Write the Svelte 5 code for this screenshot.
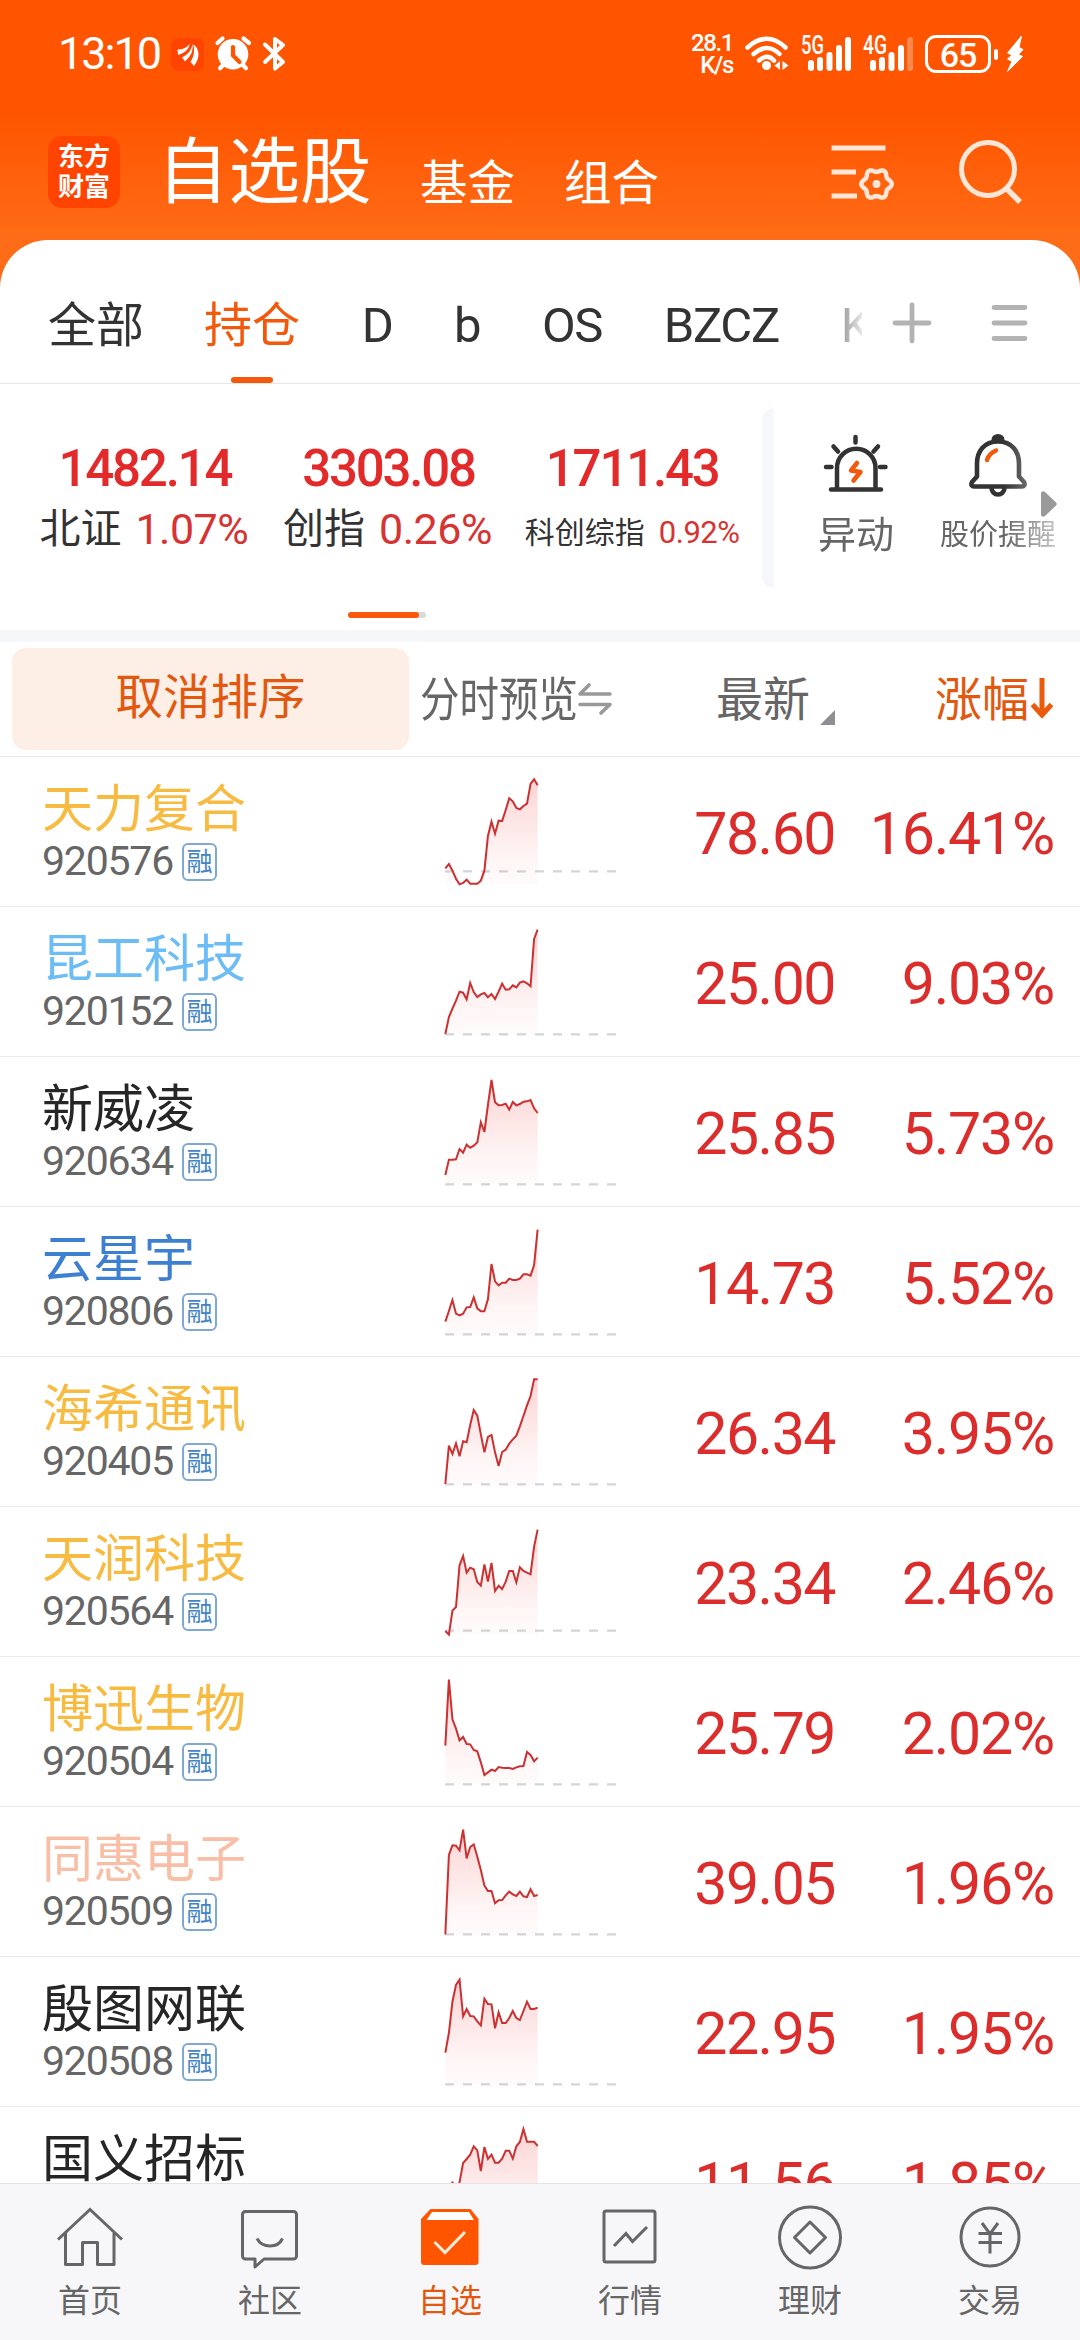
<script>
  // 自选股 - 持仓列表

  const tabs = ["全部", "持仓", "D", "b", "OS", "BZCZ", "K"];
  let tabActivo = "持仓";

  const indices = [
    { nombre: "北证", valor: "1482.14", cambio: "1.07%" },
    { nombre: "创指", valor: "3303.08", cambio: "0.26%" },
    { nombre: "科创综指", valor: "1711.43", cambio: "0.92%", small: true }
  ];

  // base = línea de cierre anterior, puntos = precio por intervalo
  const stocks = [
    { nombre: "天力复合", codigo: "920576", color: "gold", precio: "78.60", cambio: "16.41%", base: 349,
      puntos: [340,327,347,371,388,384,374,386,386,386,377,347,243,200,236,197,198,165,130,139,159,163,153,146,87,73,91] },
    { nombre: "昆工科技", codigo: "920152", color: "sky", precio: "25.00", cambio: "9.03%", base: 388,
      puntos: [387,336,311,287,260,263,283,234,261,276,268,264,277,267,282,260,236,254,253,241,247,233,229,235,244,102,74] },
    { nombre: "新威凌", codigo: "920634", color: "dark", precio: "25.85", cambio: "5.73%", base: 388,
      puntos: [360,314,314,313,282,293,269,278,272,262,202,231,150,75,142,151,150,146,164,141,151,147,140,139,135,160,174] },
    { nombre: "云星宇", codigo: "920806", color: "blue", precio: "14.73", cambio: "5.52%", base: 388,
      puntos: [350,318,285,326,331,326,307,306,277,310,319,319,283,177,229,241,233,233,221,225,225,221,208,208,212,180,74] },
    { nombre: "海希通讯", codigo: "920405", color: "gold", precio: "26.34", cambio: "3.95%", base: 388,
      puntos: [387,272,297,265,304,259,262,210,165,182,238,292,246,240,292,333,291,284,266,253,242,214,183,151,123,73,73] },
    { nombre: "天润科技", codigo: "920564", color: "gold", precio: "23.34", cambio: "2.46%", base: 377,
      puntos: [378,389,317,306,181,153,203,188,193,231,242,178,230,174,258,242,252,230,198,198,232,187,198,203,208,125,74] },
    { nombre: "博迅生物", codigo: "920504", color: "gold", precio: "25.79", cambio: "2.02%", base: 388,
      puntos: [272,74,193,221,256,246,267,268,285,289,322,360,352,344,348,336,338,339,339,342,337,334,333,291,300,319,308] },
    { nombre: "同惠电子", codigo: "920509", color: "pink", precio: "39.05", cambio: "1.96%", base: 388,
      puntos: [388,150,121,122,136,74,160,126,118,155,195,242,258,258,295,286,285,271,260,268,273,260,274,276,253,273,270] },
    { nombre: "殷图网联", codigo: "920508", color: "dark", precio: "22.95", cambio: "1.95%", base: 388,
      puntos: [293,234,140,90,74,184,162,183,184,199,211,131,147,148,220,172,204,204,189,168,189,195,168,140,162,162,158] },
    { nombre: "国义招标", codigo: "920505", color: "dark", precio: "11.56", cambio: "1.85%", base: 388,
      puntos: [388,300,230,280,232,174,162,149,124,136,198,126,162,149,173,173,161,137,137,161,124,111,72,110,110,110,123] }
  ];

  const menu = ["首页", "社区", "自选", "行情", "理财", "交易"];

  function linea(puntos) {
    return puntos.map((y, i) => `${(76 + i * 10.65).toFixed(1)},${y}`).join(" ");
  }

  // contorno ondulado del engranaje
  const engranaje = Array.from({ length: 72 }, (_, i) => {
    const a = (i * Math.PI) / 36;
    const r = 13.6 + 1.6 * Math.cos(6 * a);
    return `${(45.5 + r * Math.cos(a)).toFixed(2)},${(40 + r * Math.sin(a)).toFixed(2)}`;
  }).join(" ");
</script>

<main class="app">
  <div class="status">
    <span class="time">13:10</span>
    <svg class="st-app" width="33" height="33" viewBox="0 0 33 33">
      <rect width="33" height="33" rx="7" fill="#ff4400" />
      <path d="M6.500 11.500q8.500 0 12.500-6q-2 9-12 11.500zM11 19.500q9.500-5 10.500-13.500q2 9-7.500 17.500zM19.500 24q5-8 3-17.500q5 4 5 9.500q0 6-4.500 12z" fill="#fff" />
    </svg>
    <svg class="st-alarm" width="40" height="40" viewBox="0 0 40 40" fill="none" stroke="#fff" stroke-linecap="round">
      <circle cx="20" cy="20.3" r="15.3" fill="#fff" stroke="none" />
      <path d="M4.500 9l5-4.500M30.500 4.500l5.500 4.500M10 31l-3 3.200M30 31l3 3.200" stroke-width="4.200" />
      <path d="M20 13v8.500l6.500 6.500" stroke="#ff5500" stroke-width="4.200" />
    </svg>
    <svg class="st-bt" width="26" height="40" viewBox="0 0 26 40" fill="none" stroke="#fff" stroke-width="4" stroke-linecap="round" stroke-linejoin="round">
      <path d="M4 10.500L22 28l-8 6.500V5l8 6L4 28" />
    </svg>

    <div class="speed"><span>28.1</span><span>K/s</span></div>
    <svg class="st-wifi" width="46" height="38" viewBox="0 0 46 38" fill="none" stroke="#fff" stroke-width="4.500" stroke-linecap="round">
      <path d="M3.500 12.500Q23-5 41.500 12.500M9.500 19Q23 7 35.500 19M15 25.500Q23 18 30 25.500" />
      <circle cx="22.500" cy="30.500" r="4.500" fill="#fff" stroke="none" />
      <path d="M36 26v9l-5.500-4.500zM38.500 26v9l6-4.500z" fill="#fff" stroke="none" />
    </svg>
    <svg class="st-sig" width="54" height="38" viewBox="0 0 54 38" fill="#fff">
      <text x="0" y="18.500" class="net" textLength="23" lengthAdjust="spacingAndGlyphs">5G</text>
      <rect x="7" y="25" width="6" height="11" rx="3" />
      <rect x="16" y="22" width="6" height="14" rx="3" />
      <rect x="25.500" y="17" width="6" height="19" rx="3" />
      <rect x="35" y="10" width="6" height="26" rx="3" />
      <rect x="44" y="2" width="6" height="34" rx="3" />
    </svg>
    <svg class="st-sig second" width="54" height="38" viewBox="0 0 54 38" fill="#fff">
      <text x="0" y="18.500" class="net" textLength="24" lengthAdjust="spacingAndGlyphs">4G</text>
      <rect x="7" y="25" width="6" height="11" rx="3" />
      <rect x="16" y="22" width="6" height="14" rx="3" />
      <rect x="25.500" y="17" width="6" height="19" rx="3" />
      <rect x="35" y="10" width="6" height="26" rx="3" />
      <rect x="44" y="2" width="6" height="34" rx="3" opacity="0.3" />
    </svg>
    <div class="battery">65</div>
    <i class="nub"></i>
    <svg class="st-bolt" width="18" height="38" viewBox="0 0 18 38" fill="#fff">
      <path d="M15.500 1L1.500 18l4.500 2L1.500 24l4.500 2.500L1.500 36.500 16.500 21.500l-4-2 4.500-5-4-2z" stroke="#fff" stroke-linejoin="round" />
    </svg>
  </div>

  <header class="header">
    <div class="logo"><span>东方</span><span>财富</span></div>
    <h1 class="title">自选股</h1>
    <span class="sub">基金</span>
    <span class="sub">组合</span>
    <svg class="ic-list" width="64" height="62" viewBox="0 0 64 62" fill="none" stroke="#ffe6d6" stroke-width="5">
      <path d="M0.500 4h54M0.500 28h24.500M0.500 52h25.500" />
      <polygon points={engranaje} stroke-width="4.500" stroke-linejoin="round" />
      <circle cx="45.500" cy="40" r="4" fill="#ffe6d6" stroke="none" />
    </svg>
    <svg class="ic-search" width="66" height="66" viewBox="0 0 66 66" fill="none" stroke="#ffe6d6" stroke-width="5">
      <circle cx="31" cy="31" r="26.500" />
      <path d="M49.500 50.500L63 64" stroke-width="5.500" />
    </svg>
  </header>

  <section class="sheet">
    <nav class="tabs">
      <div class="tab-list">
        {#each tabs as tab, i}
          <button class="tab" class:latin={i > 1} class:active={tab === tabActivo} on:click={() => (tabActivo = tab)}>{tab}</button>
        {/each}
      </div>
      <svg class="ic-plus" width="40" height="42" viewBox="0 0 40 42" stroke="#b3b3b3" stroke-width="4.800" stroke-linecap="round">
        <path d="M3 21h34M20 3v36" />
      </svg>
      <svg class="ic-menu" width="38" height="40" viewBox="0 0 38 40" stroke="#b3b3b3" stroke-width="4.800" stroke-linecap="round">
        <path d="M4 4.500h31M4 20h31M4 35.500h31" />
      </svg>
    </nav>

    <div class="market">
      <div class="indices">
        {#each indices as ind}
          <div class="indice">
            <strong>{ind.valor}</strong>
            <p class:small={ind.small}><span>{ind.nombre}</span><em>{ind.cambio}</em></p>
          </div>
        {/each}
      </div>
      <div class="divider"></div>
      <div class="tools">
        <div class="tool">
          <svg width="66" height="64" viewBox="0 0 66 64" fill="none" stroke="#333" stroke-width="4.500" stroke-linecap="round">
            <path d="M14 54V34a19 19 0 0 1 38.500 0V54" />
            <path d="M8 55.500h50" />
            <path d="M32.500 3v5.500M10.500 12.500l4.500 5M55 12.500l-4.500 5M3 33h5.500M57 33h5.500" />
            <path d="M34 29l-6 7.500 9.500 1.500-7 8.500" stroke="#f2590d" stroke-width="4.500" stroke-linejoin="round" />
          </svg>
          <span>异动</span>
        </div>
        <div class="tool small">
          <svg width="66" height="64" viewBox="0 0 66 64" fill="none" stroke="#333" stroke-width="4.600" stroke-linecap="round" stroke-linejoin="round">
            <path d="M27.500 5.500a5.500 4.500 0 0 1 11 0z" fill="#333" stroke-width="2" />
            <path d="M33 7.500c-14 0-21 10-21 22v13l-5 5.500c-1.500 3 0 4.500 2 4.500h48c2 0 3.500-1.500 2-4.500l-5-5.500V29.500c0-12-7-22-21-22z" />
            <path d="M26.500 54a6.500 6.500 0 0 0 13 0" />
            <path d="M22 26q2-6.500 9-9.500" stroke="#f2590d" stroke-width="4.500" />
          </svg>
          <span>股价提醒</span>
        </div>
      </div>
      <svg class="more" width="16" height="26" viewBox="0 0 16 26" fill="#999">
        <path d="M0 3q0-4 4-2l11 10.500q1.500 1.500 0 3L4 25q-4 2-4-2z" />
      </svg>
      <div class="pager"><i></i></div>
    </div>

    <div class="band"></div>

    <div class="thead">
      <button class="cancel">取消排序</button>
      <div class="th preview">
        <span>分时预览</span>
        <svg width="34" height="32" viewBox="0 0 34 32" fill="none" stroke="#999" stroke-width="3.600" stroke-linecap="round" stroke-linejoin="round">
          <path d="M32 11H2l9-9M2 21.500h30l-9 8.500" />
        </svg>
      </div>
      <div class="th latest">最新<i></i></div>
      <div class="th change">
        涨幅
        <svg width="24" height="42" viewBox="0 0 24 42" fill="none" stroke="#ec5a0c" stroke-width="5">
          <path d="M12 0v36M2.500 26.500L12 37l9.500-10.500" />
        </svg>
      </div>
    </div>

    {#each stocks as stock}
      <article class="row">
        <div class="info">
          <h2 class={stock.color}>{stock.nombre}</h2>
          <p><span>{stock.codigo}</span><b>融</b></p>
        </div>
        <svg class="spark" width="220" height="149" viewBox="0 6 660 447" fill="none">
          <defs>
            <linearGradient id={"g" + stock.codigo} gradientUnits="userSpaceOnUse" x1="0" y1="74" x2="0" y2="388">
              <stop offset="0" stop-color="#f43c3c" stop-opacity="0.22" />
              <stop offset="0.75" stop-color="#f43c3c" stop-opacity="0.05" />
              <stop offset="1" stop-color="#f43c3c" stop-opacity="0.02" />
            </linearGradient>
          </defs>
          <path d={`M75 ${stock.base}H588`} stroke="#d3d5da" stroke-width="7" stroke-dasharray="27 27" />
          <polygon points={`76,388 ${linea(stock.puntos)} 353,388`} fill={`url(#g${stock.codigo})`} />
          <polyline points={linea(stock.puntos)} stroke="#cc3030" stroke-width="6" />
        </svg>
        <span class="price">{stock.precio}</span>
        <span class="pct">{stock.cambio}</span>
      </article>
    {/each}
  </section>

  <footer class="bottom">
    {#each menu as item, i}
      <div class="item" class:on={i === 2}>
        <svg width="72" height="72" viewBox="0 0 72 72" fill="none" stroke="#666" stroke-width="3">
          {#if i === 0}
            <path d="M4 37.500L36 7.500l32 30" />
            <path d="M11.500 31v31.500h17V40.500h15v22h16.500V31" stroke-linejoin="round" />
          {:else if i === 1}
            <path d="M11.500 9.500h48a3 3 0 0 1 3 3v41.500a3 3 0 0 1-3 3H30l-9 8v-8h-9.500a3 3 0 0 1-3-3V12.500a3 3 0 0 1 3-3z" stroke-linejoin="round" />
            <path d="M23 36.500q4 7.500 13 7.500t12.500-7.500" />
          {:else if i === 2}
            <path d="M16.500 7h40l8 10v43a3 3 0 0 1-3 3H10a3 3 0 0 1-3-3V17z" fill="#ff5500" stroke="none" />
            <path d="M18 10h37l5 8H12.500z" fill="#fff" stroke="none" />
            <path d="M20.500 40L31 50.500 51 30" stroke="#ffeadb" />
          {:else if i === 3}
            <rect x="10" y="9" width="51" height="51" rx="2" />
            <path d="M20 44l12-12.500 6.500 8L53 25" />
          {:else if i === 4}
            <circle cx="36" cy="35.500" r="30.500" />
            <path d="M36 20l15.500 15.500L36 51 20.500 35.500z" stroke-linejoin="round" />
          {:else}
            <circle cx="36" cy="35" r="29" />
            <path d="M28 21l8 11 8-11M36 32v19.500M24.500 31.500h23.500M24.500 40.500h23.500" />
          {/if}
        </svg>
        <span>{item}</span>
      </div>
    {/each}
  </footer>
</main>

<style>
  :global(body) {
    margin: 0;
    background: #fff;
  }

  .app {
    width: 1080px;
    height: 2340px;
    overflow: hidden;
    display: flex;
    flex-direction: column;
    font-family: Roboto, "Noto Sans CJK SC", sans-serif;
    background: linear-gradient(#ff5500 0, #ff5500 115px, #ff6c17 240px);
    color: #333;
  }

  svg {
    display: block;
    flex: none;
    overflow: visible;
  }

  button {
    border: none;
    background: none;
    padding: 0;
    font: inherit;
    color: inherit;
  }

  .status {
    height: 108px;
    flex: none;
    display: flex;
    align-items: center;
    box-sizing: border-box;
    padding-left: 58px;
    color: #fff;
  }

  .time {
    width: 113px;
    font-size: 45px;
    line-height: 54px;
    letter-spacing: -2px;
  }

  .st-alarm {
    margin-left: 9px;
  }

  .st-bt {
    margin-left: 8px;
  }

  .speed {
    width: 44px;
    margin-left: 402px;
    display: flex;
    flex-direction: column;
    align-items: flex-end;
    font-size: 24px;
    font-weight: 500;
    line-height: 22px;
    letter-spacing: -1.4px;
  }

  .st-wifi {
    margin-left: 11px;
  }

  .st-sig {
    margin-left: 11px;
  }

  .st-sig.second {
    margin-left: 8px;
  }

  .net {
    font-size: 25px;
    font-weight: 500;
  }

  .battery {
    width: 66px;
    height: 38px;
    box-sizing: border-box;
    border: 3px solid #fff;
    border-radius: 11px;
    margin-left: 8px;
    font-size: 34px;
    font-weight: 500;
    line-height: 34px;
    text-align: center;
    letter-spacing: -1px;
  }

  .nub {
    width: 4px;
    height: 11px;
    border-radius: 2px;
    background: #fff;
    margin-left: 3px;
  }

  .st-bolt {
    margin-left: 8px;
  }

  .header {
    height: 132px;
    flex: none;
    display: flex;
    align-items: flex-start;
    box-sizing: border-box;
    padding: 28px 0 0 48px;
    color: #fff;
  }

  .logo {
    width: 72px;
    height: 72px;
    border-radius: 14px;
    background: #ff4400;
    display: flex;
    flex-direction: column;
    align-items: center;
    justify-content: center;
    font-size: 26px;
    font-weight: 700;
    line-height: 30px;
  }

  .title {
    margin: 0 0 0 37px;
    width: 212px;
    font-size: 71.500px;
    line-height: 74px;
    font-weight: 400;
    white-space: nowrap;
  }

  .sub {
    margin-left: 51px;
    width: 94px;
    font-size: 47.500px;
    line-height: 48px;
    padding-top: 24px;
    white-space: nowrap;
  }

  .sub + .sub {
    margin-left: 50px;
  }

  .ic-list {
    margin: 8px 0 0 173px;
  }

  .ic-search {
    margin: 2px 0 0 62px;
  }

  .sheet {
    flex: 1;
    min-height: 0;
    overflow: hidden;
    background: #fff;
    border-radius: 48px 48px 0 0;
  }

  .tabs {
    height: 143px;
    border-bottom: 1px solid #e6e6e6;
    display: flex;
    align-items: center;
  }

  .tab-list {
    width: 814px;
    height: 143px;
    padding-left: 48px;
    display: flex;
    gap: 60px;
    overflow: hidden;
    flex: none;
    -webkit-mask-image: linear-gradient(90deg, #000 815px, transparent 868px);
    mask-image: linear-gradient(90deg, #000 815px, transparent 868px);
  }

  .tab {
    flex: none;
    display: flex;
    flex-direction: column;
    align-items: center;
    font-size: 48px;
    line-height: 102px;
    padding-top: 35px;
  }

  .tab.latin {
    margin-left: 1.600px;
    font-size: 49px;
    letter-spacing: -1.300px;
  }

  .tab.active {
    color: #f2590d;
  }

  .tab.active::after {
    content: "";
    width: 42px;
    height: 6px;
    border-radius: 3px;
    background: #f2590d;
  }

  .ic-plus {
    margin-left: 30px;
    margin-top: 22px;
  }

  .ic-menu {
    margin-left: 58px;
    margin-top: 22px;
  }

  .market {
    height: 246px;
    position: relative;
    display: flex;
    align-items: flex-start;
  }

  .indices {
    width: 731px;
    padding: 54px 0 0 23px;
    display: grid;
    grid-template-columns: repeat(3, 1fr);
  }

  .indice {
    display: flex;
    flex-direction: column;
    align-items: center;
    white-space: nowrap;
  }

  .indice strong {
    font-size: 51px;
    font-weight: 500;
    line-height: 62px;
    letter-spacing: -2.200px;
    color: #e22a2a;
  }

  .indice p {
    margin: 0 2px 0 0;
    height: 58px;
    line-height: 58px;
    display: flex;
    gap: 14px;
    font-size: 41px;
  }

  .indice em {
    font-style: normal;
    color: #d63333;
    font-size: 43px;
    letter-spacing: -0.5px;
  }

  .indice p.small {
    margin-right: 0;
    font-size: 30px;
    line-height: 66px;
  }

  .indice p.small em {
    font-size: 31px;
  }

  .divider {
    width: 12px;
    height: 180px;
    margin: 24px 0 0 8px;
    border-radius: 12px 0 0 12px;
    background: #f6f7fb;
  }

  .tools {
    width: 284px;
    height: 190px;
    display: flex;
    overflow: hidden;
    -webkit-mask-image: linear-gradient(90deg, #000 230px, rgba(0, 0, 0, 0.35) 284px);
    mask-image: linear-gradient(90deg, #000 230px, rgba(0, 0, 0, 0.35) 284px);
  }

  .tool {
    width: 76px;
    margin-left: 44px;
    padding-top: 50px;
    display: flex;
    flex-direction: column;
    align-items: center;
    color: #666;
    font-size: 38px;
    line-height: 74px;
    white-space: nowrap;
    flex: none;
  }

  .tool.small {
    width: 116px;
    margin-left: 46px;
    font-size: 29px;
  }

  .more {
    position: absolute;
    left: 1041px;
    top: 107px;
  }

  .pager {
    position: absolute;
    left: 348px;
    top: 228px;
    width: 78px;
    height: 6px;
    border-radius: 3px;
    background: #d9d9d9;
  }

  .pager i {
    display: block;
    width: 71px;
    height: 6px;
    border-radius: 3px;
    background: #f95a0a;
  }

  .band {
    height: 12px;
    background: #f5f7fa;
  }

  .thead {
    height: 114px;
    border-bottom: 1px solid #ebebeb;
    display: flex;
    align-items: center;
    font-size: 47px;
    color: #666;
  }

  .cancel {
    width: 397px;
    height: 102px;
    margin-left: 12px;
    border-radius: 14px;
    background: #fdeee6;
    color: #e2580f;
    font-size: 47.500px;
    line-height: 98px;
    padding-bottom: 3px;
    flex: none;
  }

  .th {
    display: flex;
    align-items: center;
    line-height: 97px;
    height: 102px;
    flex: none;
  }

  .preview {
    width: 200px;
    margin-left: 11px;
  }

  .preview span {
    width: 158px;
    white-space: nowrap;
    transform: scaleX(0.84);
    transform-origin: 0 50%;
  }

  .latest {
    width: 119px;
    margin-left: 96px;
  }

  .latest i {
    margin: 36px 0 0 10px;
    border-left: 15px solid transparent;
    border-bottom: 15px solid #8e8e93;
  }

  .change {
    margin-left: 100px;
    color: #e2580f;
    gap: 1px;
  }

  .row {
    height: 149px;
    border-bottom: 1px solid #ebebeb;
    display: flex;
  }

  .info {
    width: 378px;
    padding: 20px 0 0 42px;
  }

  .info h2 {
    margin: 0;
    font-size: 51px;
    line-height: 66px;
    font-weight: 400;
  }

  .info p {
    margin: 0;
    height: 38px;
    display: flex;
    align-items: center;
    gap: 9px;
    color: #666;
    font-size: 41px;
    line-height: 36px;
    letter-spacing: -1.200px;
  }

  .info span {
    height: 38px;
  }

  .info b {
    width: 35px;
    height: 38px;
    box-sizing: border-box;
    border: 2px solid #7fa8d4;
    border-radius: 6px;
    color: #4484c4;
    font-size: 26px;
    font-weight: 400;
    line-height: 34px;
    letter-spacing: 0;
    text-align: center;
  }

  .gold { color: #f8bb42; }
  .sky { color: #6cbcf6; }
  .blue { color: #3d7fd0; }
  .dark { color: #262626; }
  .pink { color: #f8bfa6; }

  .price,
  .pct {
    font-size: 59px;
    line-height: 153px;
    letter-spacing: -1.500px;
    color: #dc2d2d;
    text-align: right;
    height: 149px;
  }

  .price {
    width: 195px;
  }

  .pct {
    width: 219px;
    letter-spacing: -1.200px;
  }

  .bottom {
    height: 156px;
    flex: none;
    border-top: 1px solid #e4e4e6;
    background: #f7f7fa;
    display: grid;
    grid-template-columns: repeat(6, 1fr);
  }

  .item {
    display: flex;
    flex-direction: column;
    align-items: center;
    padding-top: 18px;
    font-size: 32px;
    line-height: 54px;
    color: #666;
  }

  .item.on {
    color: #e2580f;
  }
</style>
